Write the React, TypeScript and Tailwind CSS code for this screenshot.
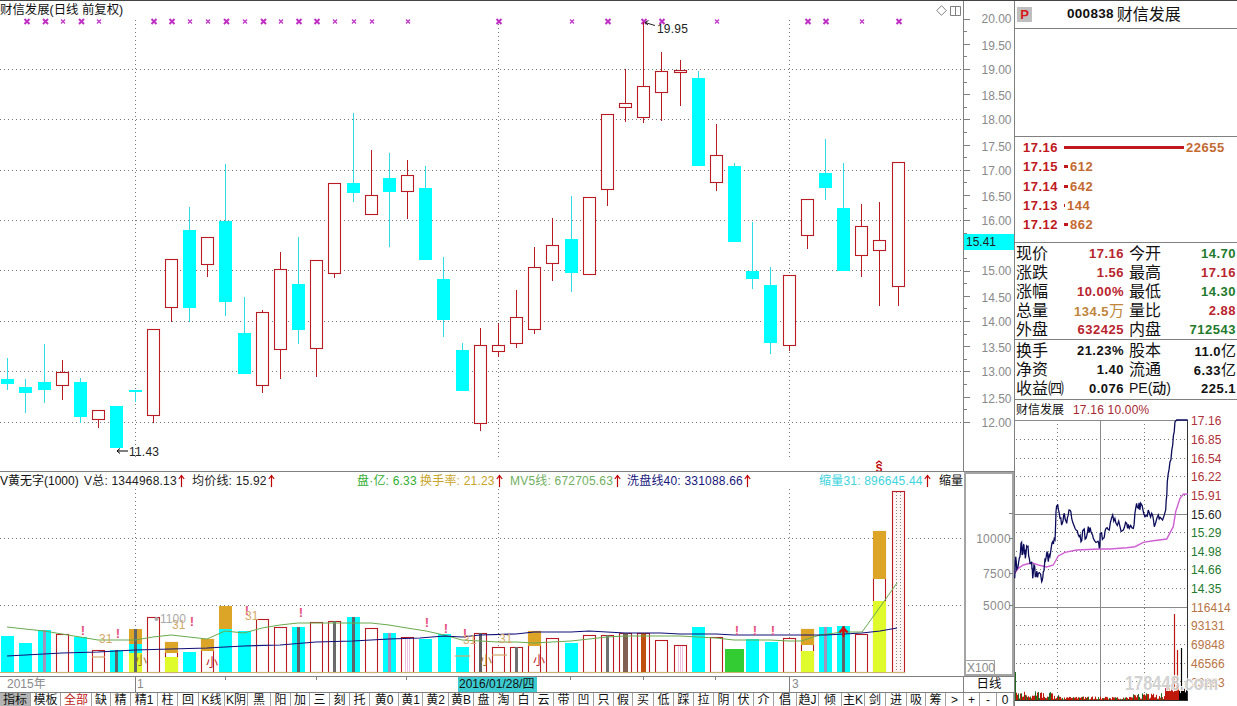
import React from "react";

type C = [number, number, number, number, number, "r" | "c"];
const candles: C[] = [
  [7.5,379,384,358,390,"c"],[25.5,387,393,379,413,"c"],[44.5,382,390,344,403,"c"],[62.5,372,385,360,400,"r"],
  [80.5,382,417,378,423,"c"],[98.5,410,419,410,428,"r"],[116.5,406,448,406,448,"c"],[135.5,390,392,390,402,"c"],
  [153.5,329,415,329,423,"r"],[171.5,259,307,259,322,"r"],[189.5,230,308,207,322,"c"],[207.5,237,264,237,277,"r"],
  [225.5,221,302,164,316,"c"],[244.5,333,374,297,374,"c"],[262.5,312,385,310,393,"r"],[280.5,269,349,252,379,"r"],
  [298.5,284,330,237,344,"c"],[316.5,260,348,260,377,"r"],[334.5,183,273,183,278,"r"],[353.5,183,193,113,202,"c"],
  [371.5,195,214,150,214,"r"],[389.5,178,192,153,247,"c"],[407.5,175,191,160,219,"r"],[425.5,188,260,166,260,"c"],
  [443.5,279,320,257,337,"c"],[462.5,350,391,343,391,"c"],[480.5,345,423,328,431,"r"],[498.5,345,351,323,357,"r"],
  [516.5,317,343,290,348,"r"],[534.5,267,329,247,334,"r"],[552.5,245,263,218,281,"r"],[571.5,239,273,196,292,"c"],
  [589.5,197,274,197,274,"r"],[607.5,114,189,114,206,"r"],[625.5,103,107,69,122,"r"],[643.5,86,117,22,123,"r"],
  [661.5,71,92,52,121,"r"],[680.5,70,72,60,106,"r"],[698.5,78,166,71,166,"c"],[716.5,155,182,124,191,"r"],
  [734.5,166,242,163,242,"c"],[752.5,271,279,222,289,"c"],[770.5,285,343,267,354,"c"],[789.5,275,345,275,351,"r"],
  [807.5,199,235,199,249,"r"],[825.5,173,188,139,200,"c"],[843.5,208,271,163,271,"c"],[861.5,226,255,204,277,"r"],
  [879.5,240,250,202,306,"r"],[898.5,162,286,162,306,"r"],
];

const RED = "#b81c22";
const bigX = [27,45.5,81.5,154,172,226.5,263.5,299,317,499,608,644,662,808,826,899];
const smallX = [63,99,190,208,245,281,335,354,372,408,572,717,862];

const gridH = [69.5,119.5,170.5,220.5,270.5,321.5,371.5,422.5];
const axisLabels: [string, number][] = [
  ["20.00",18],["19.50",45.5],["19.00",69.5],["18.50",95.5],["18.00",119.5],["17.50",146.5],["17.00",170.5],["16.50",196.5],
  ["16.00",220.5],["15.00",270.5],["14.50",297.5],["14.00",321.5],["13.50",347.5],["13.00",371.5],["12.50",398.5],["12.00",422.5],
];

type V = { x: number; t: number; k: "c" | "r" | "g"; g?: [number, number]; y?: number; s?: string; sw?: number; pink?: boolean };
const DK = "#5f6468", PU = "#a294bc", BR = "#806050", OR = "#c05010";
const vols: V[] = [
  {x:7.5,t:636,k:"c"},{x:25.5,t:643,k:"c"},{x:44.5,t:630,k:"c",s:PU},{x:62.5,t:634,k:"r"},{x:80.5,t:637,k:"c"},
  {x:98.5,t:650,k:"r"},{x:116.5,t:650,k:"c",s:DK},{x:135.5,t:629,k:"c",g:[629,644],y:653,s:DK},{x:153.5,t:617,k:"r"},
  {x:171.5,t:642,k:"r",g:[642,653],y:657},{x:189.5,t:652,k:"c"},{x:207.5,t:639,k:"r",g:[639,651]},
  {x:225.5,t:606,k:"c",g:[606,629]},{x:244.5,t:631,k:"c"},{x:262.5,t:619,k:"r"},{x:280.5,t:627,k:"r"},
  {x:298.5,t:627,k:"c",s:DK},{x:316.5,t:622,k:"r"},{x:334.5,t:621,k:"r",s:"#6a6a6a"},{x:353.5,t:617,k:"c",s:DK},
  {x:371.5,t:628,k:"r"},{x:389.5,t:633,k:"c",s:PU},{x:407.5,t:637,k:"r",pink:true},{x:425.5,t:639,k:"c"},
  {x:444.5,t:634,k:"c"},{x:462.5,t:647,k:"c"},{x:480.5,t:633,k:"r",s:"#606060"},{x:498.5,t:647,k:"r"},
  {x:516.5,t:647,k:"r",s:"#707070"},{x:534.5,t:631,k:"r",g:[631,646]},{x:552.5,t:638,k:"r"},{x:571.5,t:643,k:"c"},
  {x:589.5,t:635,k:"r"},{x:607.5,t:635,k:"r",s:"#707070"},{x:625.5,t:633,k:"r",s:BR,sw:5},{x:643.5,t:633,k:"r",s:OR,sw:5},
  {x:661.5,t:640,k:"r"},{x:680.5,t:645,k:"r",pink:true},{x:698.5,t:627,k:"c"},{x:716.5,t:637,k:"r"},
  {x:734.5,t:649,k:"g"},{x:752.5,t:639,k:"c"},{x:771.5,t:642,k:"c"},{x:789.5,t:638,k:"r"},
  {x:807.5,t:629,k:"r",g:[629,645],y:651},{x:825.5,t:627,k:"c",s:PU},{x:843.5,t:626,k:"c",s:DK},{x:861.5,t:634,k:"r"},
  {x:879.5,t:531,k:"r",g:[531,579],y:601},
];

const greenLine = "7,627 25,629 44,631 62,634 80,637 98,640 116,640 135,640 153,637 171,635 189,637 207,639 225,631 244,633 262,628 280,625 298,623 316,623 334,623 353,623 371,623 389,625 407,628 426,631 444,635 462,640 480,641 498,642 516,642 534,643 552,642 571,641 589,639 607,637 625,636 643,636 661,636 680,636 698,637 716,638 734,640 752,640 770,640 789,641 801,641 820,635 843,632 862,632 880,607 897,583";
const navyLine = "7,656 62,653 98,652 135,650 171,649 207,648 225,647 244,646 280,645 316,642 353,641 389,639 420,638 444,636 462,637 480,635 516,634 534,632 552,632 571,632 589,631 607,632 625,633 661,633 680,634 698,634 716,634 734,635 752,635 789,635 808,635 826,635 844,634 862,633 880,631 897,628";

const excl: [number, number][] = [[83,635],[118,638],[192,626],[247,615],[301,617],[427,627],[446,633],[465,638],[737,635],[755,635],[773,635]];
const t31: [number, number][] = [[99,643],[172,629],[245,620],[463,644],[499,643]];
const xiao: [number, number, string][] = [[135,665,"#a86a20"],[206,667,"#c02020"],[480,665,"#a86a20"],[533,665,"#c02020"]];
const tanDash: [number, number, number][] = [[92,105,657],[455,470,656],[492,507,655]];

const tabs = ["指标","模板","全部","缺","精","精1","柱","回","K线","K阴","黑","阳","加","三","刻","托","黄0","黄1","黄2","黄B","盘","淘","白","云","带","凹","只","假","买","低","踩","拉","阴","伏","介","倡","趋J","倾","主K","剑","进","吸","筹",">","+","-","0"];

const Arrow = () => (
  <svg width="7" height="14" viewBox="0 0 7 14" className="ml-[1px] shrink-0">
    <path d="M3.5 13V1.5M0.8 5L3.5 1.5L6.2 5" fill="none" stroke="#c00000" strokeWidth="1.2" />
  </svg>
);

const PriceChart = () => (
  <svg width="963" height="451" viewBox="0 20 963 451" className="block overflow-visible">
    {gridH.map((y) => <line key={y} x1="0" x2="963" y1={y} y2={y} stroke="#777" strokeDasharray="1 3" />)}
    {[135.5, 498.5, 789.5].map((x) => <line key={x} x1={x} x2={x} y1="20" y2="458" stroke="#777" strokeDasharray="1 3" />)}
    {bigX.map((x) => (
      <path key={x} d={`M${x-2.5} 19l5 5M${x+2.5} 19l-5 5`} stroke="#bf2fc4" strokeWidth="2" />
    ))}
    {smallX.map((x) => (
      <path key={x} d={`M${x-2} 19.5l4 4M${x+2} 19.5l-4 4`} stroke="#c038c8" strokeWidth="1.3" />
    ))}
    {candles.map(([x, bt, bb, wt, wb, k]) =>
      k === "c" ? (
        <g key={x}>
          <line x1={x} x2={x} y1={wt} y2={wb} stroke="#2fdce6" />
          <rect x={x - 6.5} y={bt} width="13" height={bb - bt} fill="#00ffff" />
        </g>
      ) : (
        <g key={x}>
          <line x1={x} x2={x} y1={wt} y2={wb} stroke={RED} />
          <rect x={x - 6} y={bt + 0.5} width="12" height={bb - bt} fill="#fff" stroke={RED} strokeWidth="1.1" />
        </g>
      )
    )}
    <path d="M128 451H117M120 448.5L117 451L120 453.5" fill="none" stroke="#000" />
    <text x="129" y="456" fontSize="12" fill="#222" letterSpacing="0.2">11.43</text>
    <path d="M655 25.5L645 22.5M648.5 20.5L645 22.5L648 25" fill="none" stroke="#222" />
    <text x="657" y="33" fontSize="12" fill="#222" letterSpacing="0.2">19.95</text>
    <path d="M876 463.5L879 461L882 463.5" fill="none" stroke="#c00000" strokeWidth="1.2" />
    <text x="879" y="472" fontSize="10" fontWeight="700" textAnchor="middle" fill="#c00000">S</text>
  </svg>
);

const PriceAxis = () => {
  const major: number[] = [];
  const minor: number[] = [];
  for (let i = 0; i <= 16; i++) major.push(18.5 + i * 25.2);
  for (let i = 0; i < 16; i++) minor.push(18.5 + (i + 0.5) * 25.2);
  return (
    <svg width="50" height="470" viewBox="964 1 50 470" className="block">
      {major.map((y) => <line key={y} x1="964" x2="970" y1={Math.round(y) + 0.5} y2={Math.round(y) + 0.5} stroke="#808080" />)}
      {minor.map((y) => <line key={y} x1="964" x2="967" y1={Math.round(y) + 0.5} y2={Math.round(y) + 0.5} stroke="#808080" />)}
      {axisLabels.map(([s, y]) => (
        <text key={s} x="1011.5" y={y + 4.5} textAnchor="end" fontSize="12" fill="#8a8a8a">{s}</text>
      ))}
    </svg>
  );
};

const VolumeChart = () => (
  <svg width="963" height="187" viewBox="0 489 963 187" className="block">
    {[538.5, 605.5].map((y) => <line key={y} x1="0" x2="963" y1={y} y2={y} stroke="#777" strokeDasharray="1 3" />)}
    {[135.5, 498.5, 789.5].map((x) => <line key={x} x1={x} x2={x} y1="489" y2="672" stroke="#777" strokeDasharray="1 3" />)}
    {vols.map((v) => {
      if (v.k === "g") return <rect key={v.x} x="725" y={v.t} width="19" height={672 - v.t} fill="#33cc33" />;
      const top = v.g ? v.g[0] : v.t;
      return (
        <g key={v.x}>
          {v.k === "c" ? (
            <rect x={v.x - 6.5} y={v.t} width="13" height={672 - v.t} fill="#00ffff" />
          ) : (
            <rect x={v.x - 6} y={v.t + 0.5} width="12" height={672 - v.t} fill="#fff" stroke={RED} strokeWidth="1.1" />
          )}
          {v.g && <rect x={v.x - 6.5} y={v.g[0]} width="13" height={v.g[1] - v.g[0]} fill="#dca528" />}
          {v.y && <rect x={v.x - 6.5} y={v.y} width="13" height={672 - v.y} fill="#e0fb2c" />}
          {v.s && <rect x={v.x - (v.sw || 3) / 2} y={top} width={v.sw || 3} height={672 - top} fill={v.s} />}
          {v.pink && [-2, 0, 2].map((d) => (
            <line key={d} x1={v.x + d} x2={v.x + d} y1={v.t + 1} y2="672" stroke="#eec0e2" />
          ))}
        </g>
      );
    })}
    <rect x="892.5" y="491.5" width="12" height="181" fill="#fff5f5" stroke={RED} strokeWidth="1.1" />
    <line x1="896.5" x2="896.5" y1="492" y2="672" stroke="#888" strokeDasharray="1 2" />
    <line x1="900.5" x2="900.5" y1="492" y2="672" stroke="#888" strokeDasharray="1 2" />
    {tanDash.map(([a, b, y]) => <line key={a} x1={a} x2={b} y1={y} y2={y} stroke="#d4a868" strokeWidth="1.2" />)}
    <polyline points={greenLine} fill="none" stroke="#68ab4c" />
    <polyline points={navyLine} fill="none" stroke="#10107a" strokeWidth="1.2" />
    <line x1="0" x2="905" y1="672.5" y2="672.5" stroke="#c8b472" />
    {excl.map(([x, y]) => <text key={x} x={x} y={y} textAnchor="middle" fontSize="13" fontWeight="700" fill="#e8517f">!</text>)}
    {t31.map(([x, y]) => <text key={x} x={x} y={y} fontSize="12" fill="#d4a868">31</text>)}
    {xiao.map(([x, y, c]) => <text key={x} x={x} y={y} fontSize="12" fill={c}>小</text>)}
    <circle cx="156.5" cy="619" r="2" fill="#aaa" />
    <text x="160" y="623" fontSize="12" fill="#aaa">1100</text>
    <path d="M843.5 637V629M839.5 632.5L843.5 628L847.5 632.5" fill="none" stroke="#d01010" strokeWidth="2.2" />
  </svg>
);

const VolumeAxis = () => (
  <svg width="50" height="204" viewBox="964 472 50 204" className="block">
    <rect x="965" y="473" width="48" height="202" fill="#fff" stroke="#a4a4a4" strokeWidth="2" />
    {[513.5, 538.5, 573.5, 605.5].map((y) => <line key={y} x1="1009" x2="1013" y1={y} y2={y} stroke="#808080" />)}
    <text x="1011" y="543" textAnchor="end" fontSize="12" fill="#8a8a8a" letterSpacing="0.3">10000</text>
    <text x="1011" y="578" textAnchor="end" fontSize="12" fill="#8a8a8a" letterSpacing="0.3">7500</text>
    <text x="1011" y="610" textAnchor="end" fontSize="12" fill="#8a8a8a" letterSpacing="0.3">5000</text>
    <rect x="965.5" y="660.5" width="29" height="14" fill="#fff" stroke="#a4a4a4" />
    <text x="967" y="671.5" fontSize="12" fill="#8a8a8a">X100</text>
  </svg>
);

const priceZ: [number, number][] = [[14,550],[17,485],[22,520],[28,490],[33,445],[38,475],[42,450],[46,490],[52,455],[58,490],[65,500],[68,550],[72,510],[78,545],[85,535],[95,560],[100,530],[105,490],[110,475],[115,500],[122,470],[128,440],[135,435],[138,350],[143,328],[150,370],[157,385],[163,355],[170,385],[177,345],[185,370],[195,400],[205,420],[213,440],[220,405],[228,430],[235,395],[243,410],[250,430],[262,440],[268,460],[272,415],[280,430],[288,400],[298,405],[308,360],[318,385],[330,395],[340,405],[350,385],[358,400],[370,400],[377,340],[385,340],[392,325],[405,365],[415,345],[425,355],[433,395],[445,360],[453,370],[467,345],[472,260],[480,200],[488,150],[495,80],[500,75],[533,75]];
const avgZ: [number, number][] = [[14,535],[25,520],[40,510],[65,503],[85,510],[110,516],[130,510],[145,483],[165,472],[200,465],[268,462],[300,462],[350,458],[375,455],[400,442],[430,437],[470,432],[490,395],[497,350],[510,310],[520,298],[533,297]];
const toPts = (a: [number, number][]) => a.map(([x, y]) => `${(1010 + x / 3).toFixed(1)},${(395 + y / 3).toFixed(1)}`).join(" ");

function lcg(seed: number) {
  let s = seed;
  return () => {
    s = (s * 1103515245 + 12345) & 0x7fffffff;
    return s / 0x7fffffff;
  };
}

const jaggedPrice = (() => {
  const r = lcg(7);
  const out: string[] = [];
  for (let i = 0; i < priceZ.length - 1; i++) {
    const [x0, y0] = priceZ[i];
    const [x1, y1] = priceZ[i + 1];
    const flat = i >= priceZ.length - 3;
    const n = flat ? 1 : 3;
    for (let j = 0; j < n; j++) {
      const t = j / n;
      const jy = flat || j === 0 ? 0 : (r() - 0.5) * 30;
      out.push(`${(1010 + (x0 + (x1 - x0) * t) / 3).toFixed(1)},${(395 + (y0 + (y1 - y0) * t + jy) / 3).toFixed(1)}`);
    }
  }
  out.push(`${(1010 + 533 / 3).toFixed(1)},${(395 + 75 / 3).toFixed(1)}`);
  return out.join(" ");
})();

const miniBars = (() => {
  const r = lcg(21);
  const bars: { x: number; h: number; c: string }[] = [];
  for (let x = 1016; x < 1187; x++) {
    let env = 2;
    let min = 1;
    if (x < 1060) { env = 8; min = 1; }
    else if (x < 1130) { env = 3; min = 0.5; }
    else if (x < 1165) { env = 6; min = 1; }
    else if (x < 1179) { env = 10; min = 8; }
    else { env = 10; min = 3; }
    const h = min + r() * env;
    const v = r();
    const c = x > 1178 ? "#000" : x >= 1165 ? "#c01808" : v < 0.6 ? "#c01808" : "#206b20";
    bars.push({ x, h, c });
  }
  return bars;
})();

const miniLabels: [string, number, string][] = [
  ["17.16",420.5,"#b03038"],["16.85",439,"#b03038"],["16.54",458,"#b03038"],["16.22",476,"#b03038"],["15.91",495,"#b03038"],
  ["15.60",514,"#222"],["15.29",532,"#237a2d"],["14.98",551,"#237a2d"],["14.66",569,"#237a2d"],["14.35",588,"#237a2d"],
  ["116414",607,"#b87444"],["93131",625,"#b87444"],["69848",644,"#b87444"],["46566",663,"#b87444"],["23283",682,"#b87444"],
];

const MiniChart = () => (
  <svg width="222" height="286" viewBox="1015 420 222 286" className="block overflow-visible">
    {[439.5, 458.5, 476.5, 495.5, 532.5, 551.5, 569.5, 588.5, 625.5, 644.5, 663.5, 681.5].map((y) => (
      <line key={y} x1="1016" x2="1187" y1={y} y2={y} stroke="#777" strokeDasharray="1 3" />
    ))}
    {[1057.5, 1144.5].map((x) => <line key={x} x1={x} x2={x} y1="420" y2="700" stroke="#777" strokeDasharray="1 3" />)}
    <line x1="1100.5" x2="1100.5" y1="420" y2="700" stroke="#8a8a8a" />
    <line x1="1015" x2="1188" y1="514.5" y2="514.5" stroke="#8a8a8a" />
    <line x1="1015" x2="1188" y1="607.5" y2="607.5" stroke="#8a8a8a" />
    <line x1="1015" x2="1188" y1="420.5" y2="420.5" stroke="#8a8a8a" />
    <line x1="1187.5" x2="1187.5" y1="420" y2="700" stroke="#333" />
    <line x1="1015" x2="1188" y1="700.5" y2="700.5" stroke="#333" />
    {miniBars.map((b) => <line key={b.x} x1={b.x + 0.5} x2={b.x + 0.5} y1="700" y2={700 - b.h} stroke={b.c} />)}
    <line x1="1015.5" x2="1015.5" y1="672" y2="700" stroke="#206b20" />
    <line x1="1174.5" x2="1174.5" y1="614" y2="700" stroke="#b81810" strokeWidth="1.2" />
    <line x1="1177.5" x2="1177.5" y1="650" y2="700" stroke="#c01808" strokeWidth="1.2" />
    <line x1="1181.5" x2="1181.5" y1="648" y2="700" stroke="#000" strokeWidth="1.2" />
    <polyline points={toPts(avgZ)} fill="none" stroke="#cf5fd4" strokeWidth="1.4" />
    <polyline points={jaggedPrice} fill="none" stroke="#0c0c5c" strokeWidth="1.3" />
    {miniLabels.map(([s, y, c]) => (
      <text key={s} x="1191" y={y + 4.5} fontSize="12" fill={c} letterSpacing="0.1">{s}</text>
    ))}
    <text x="1125" y="690" fontSize="21" fontWeight="700" fill="#cfcfcf" stroke="#ffffff" strokeWidth="2" paintOrder="stroke" opacity="0.9" textLength="93" lengthAdjust="spacingAndGlyphs">178448.com</text>
  </svg>
);

const Book = ({ p, w, q, bar }: { p: string; w: string; q: string; bar?: string }) => (
  <div className="flex h-[19.3px] items-center pl-[8px] text-[13px] font-bold tracking-[0.5px]">
    <span className="w-[41px] text-[#c0181c]">{p}</span>
    <span className={`${w} h-[3px] ${bar || "bg-[#c0181c]"} mr-[2px]`} />
    <span className="text-[#c46a30]">{q}</span>
  </div>
);

const Row = ({ a, av, ac, b, bv, bc, h }: { a: string; av: React.ReactNode; ac: string; b: React.ReactNode; bv: React.ReactNode; bc: string; h?: boolean }) => (
  <div className="grid h-[19px] grid-cols-[108px_107px] gap-x-[5px] pl-[1px] leading-[19px]">
    <div className="flex justify-between">
      <span className="text-[16px] text-[#111]">{a}</span>
      <span className={`text-[13px] font-bold tracking-[0.5px] ${ac}`}>{av}</span>
    </div>
    <div className="flex justify-between">
      <span className={h ? "text-[14px] font-medium text-[#111]" : "text-[16px] text-[#111]"}>{b}</span>
      <span className={`text-[13px] font-bold tracking-[0.5px] ${bc}`}>{bv}</span>
    </div>
  </div>
);

const Unit = ({ n, u }: { n: string; u: string }) => (
  <>
    {n}
    <span className="text-[15px] font-normal tracking-normal">{u}</span>
  </>
);

export default function App() {
  const R = "text-[#b8242c]";
  const G = "text-[#1f7a2c]";
  const K = "text-[#111]";
  return (
    <div className="flex h-[706px] w-[1237px] overflow-hidden border-t border-[#444] bg-white font-['Liberation_Sans','Noto_Sans_CJK_SC',sans-serif] text-[12px] text-[#111]">
      <div className="flex w-[1014px] shrink-0 flex-col">
        <div className="flex h-[470px]">
          <div className="w-[963px]">
            <div className="flex h-[19px] items-center justify-between pr-[2px]">
              <span className="text-[12.4px] leading-[19px]">财信发展(日线 前复权)</span>
              <div className="flex items-center gap-[3px]">
                <svg width="11" height="11" viewBox="0 0 11 11"><path d="M5.5 0.7L10.3 5.5L5.5 10.3L0.7 5.5Z" fill="none" stroke="#808080" /></svg>
                <svg width="11" height="10" viewBox="0 0 11 10"><path d="M0.5 0.5H10.5V9.5H0.5ZM5.5 0.5V9.5" fill="none" stroke="#808080" /></svg>
              </div>
            </div>
            <PriceChart />
          </div>
          <div className="relative w-[51px] border-l border-[#808080]">
            <PriceAxis />
            <div className="absolute left-0 right-0 top-[233px] h-[16px] bg-[#00ffff] pl-[2px] text-[12px] leading-[16px] text-[#222]">15.41</div>
          </div>
        </div>
        <div className="flex h-[205px] border-t border-[#808080]">
          <div className="w-[963px]">
            <div className="flex h-[17px] items-center whitespace-nowrap text-[12px] tracking-[0.2px]">
              <span className="w-[84px] shrink-0 tracking-normal">V黄无字(1000)</span>
              <span className="flex w-[108px] shrink-0 items-center text-[#222]">V总: 1344968.13<Arrow /></span>
              <span className="flex w-[165px] shrink-0 items-center text-[#222]">均价线: 15.92<Arrow /></span>
              <span className="w-[63px] shrink-0 text-[#2fae2f]">盘·亿: 6.33</span>
              <span className="flex w-[90px] shrink-0 items-center text-[#c8a428]">换手率: 21.23<Arrow /></span>
              <span className="flex w-[117px] shrink-0 items-center text-[#70b060]">MV5线: 672705.63<Arrow /></span>
              <span className="flex w-[192px] shrink-0 items-center text-[#16167c]">洗盘线40: 331088.66<Arrow /></span>
              <span className="flex w-[120px] shrink-0 items-center text-[#3ed4dc]">缩量31: 896645.44<Arrow /></span>
              <span className="w-[24px] shrink-0 tracking-normal text-[#111]">缩量</span>
            </div>
            <VolumeChart />
          </div>
          <div className="w-[51px]">
            <div className="ml-[1px]"><VolumeAxis /></div>
          </div>
        </div>
        <div className="relative flex h-[17px] border-y border-[#808080] text-[12px] leading-[15px] text-[#8a8a8a]">
          <span className="w-[135px] pl-[7px]">2015年</span>
          <span className="w-[323px] border-l border-[#808080] pl-[1px]">1</span>
          <span className="w-[79px] bg-[#3ccbd0] pl-[1px] text-[#111]">2016/01/28/四</span>
          <span className="w-[252px]" />
          <span className="w-[174px] border-l border-[#808080] pl-[2px]">3</span>
          <span className="w-[51px] border-l border-[#808080] text-center text-[12.5px] text-[#111]">日线</span>
          <svg width="800" height="4" viewBox="0 0 800 4" className="absolute left-0 top-0">
            <path d="M225.5 0V3M316.5 0V3M406.5 0V3M570.5 0V3M643.5 0V3M715.5 0V3" stroke="#808080" />
          </svg>
        </div>
        <div className="grid h-[14px] grid-cols-[31px_30px_31px_19px_20px_27px_20px_21px_26px_23px_23px_20px_19px_20px_20px_20px_29px_24px_26px_25px_20px_20px_20px_20px_20px_20px_20px_19px_21px_20px_20px_20px_20px_20px_20px_23px_22px_23px_23px_21px_21px_19px_20px_18px_16px_17px_17px] text-center text-[12px] leading-[15px]">
          {tabs.map((t, i) => (
            <span key={i} className={`overflow-hidden border-r border-[#a0a0a0] ${i === 0 ? "bg-[#b4b4b4]" : ""} ${i === 2 ? "text-[#c01818]" : ""}`}>{t}</span>
          ))}
        </div>
      </div>

      <div className="flex w-[223px] shrink-0 flex-col border-l border-[#808080]">
        <div className="flex h-[28px] items-center border-b border-[#808080] pl-[2px]">
          <span className="flex h-[15px] w-[15px] items-center justify-center bg-[#bfbfbf] text-[13px] font-bold text-[#d81818]">P</span>
          <span className="ml-[35px] text-[13.5px] font-bold tracking-[0.3px] text-[#111]">000838</span>
          <span className="ml-[3px] text-[16px] leading-[20px]">财信发展</span>
        </div>
        <div className="h-[108px] border-b border-[#808080]" />
        <div className="h-[106px] border-b border-[#808080] pt-[1px]">
          <Book p="17.16" w="w-[120px]" q="22655" />
          <Book p="17.15" w="w-[4px]" q="612" />
          <Book p="17.14" w="w-[4px]" q="642" />
          <Book p="17.13" w="w-[1px]" q="144" />
          <Book p="17.12" w="w-[4px]" q="862" />
        </div>
        <div className="h-[97px] border-b border-[#808080] pt-[1px]">
          <Row a="现价" av="17.16" ac={R} b="今开" bv="14.70" bc={G} />
          <Row a="涨跌" av="1.56" ac={R} b="最高" bv="17.16" bc={R} />
          <Row a="涨幅" av="10.00%" ac={R} b="最低" bv="14.30" bc={G} />
          <Row a="总量" av={<Unit n="134.5" u="万" />} ac="text-[#c0853a]" b="量比" bv="2.88" bc={R} />
          <Row a="外盘" av="632425" ac={R} b="内盘" bv="712543" bc={G} />
        </div>
        <div className="h-[60px] border-b border-[#808080] pt-[1px]">
          <Row a="换手" av="21.23%" ac={K} b="股本" bv={<Unit n="11.0" u="亿" />} bc={K} />
          <Row a="净资" av="1.40" ac={K} b="流通" bv={<Unit n="6.33" u="亿" />} bc={K} />
          <Row a="收益㈣" av="0.076" ac={K} b="PE(动)" bv="225.1" bc={K} h />
        </div>
        <div className="flex h-[20px] items-center pl-[1px] leading-[20px]">
          <span className="w-[57px] text-[12px]">财信发展</span>
          <span className="tracking-[0.2px] text-[#a82830]">17.16 10.00%</span>
        </div>
        <MiniChart />
      </div>
    </div>
  );
}
